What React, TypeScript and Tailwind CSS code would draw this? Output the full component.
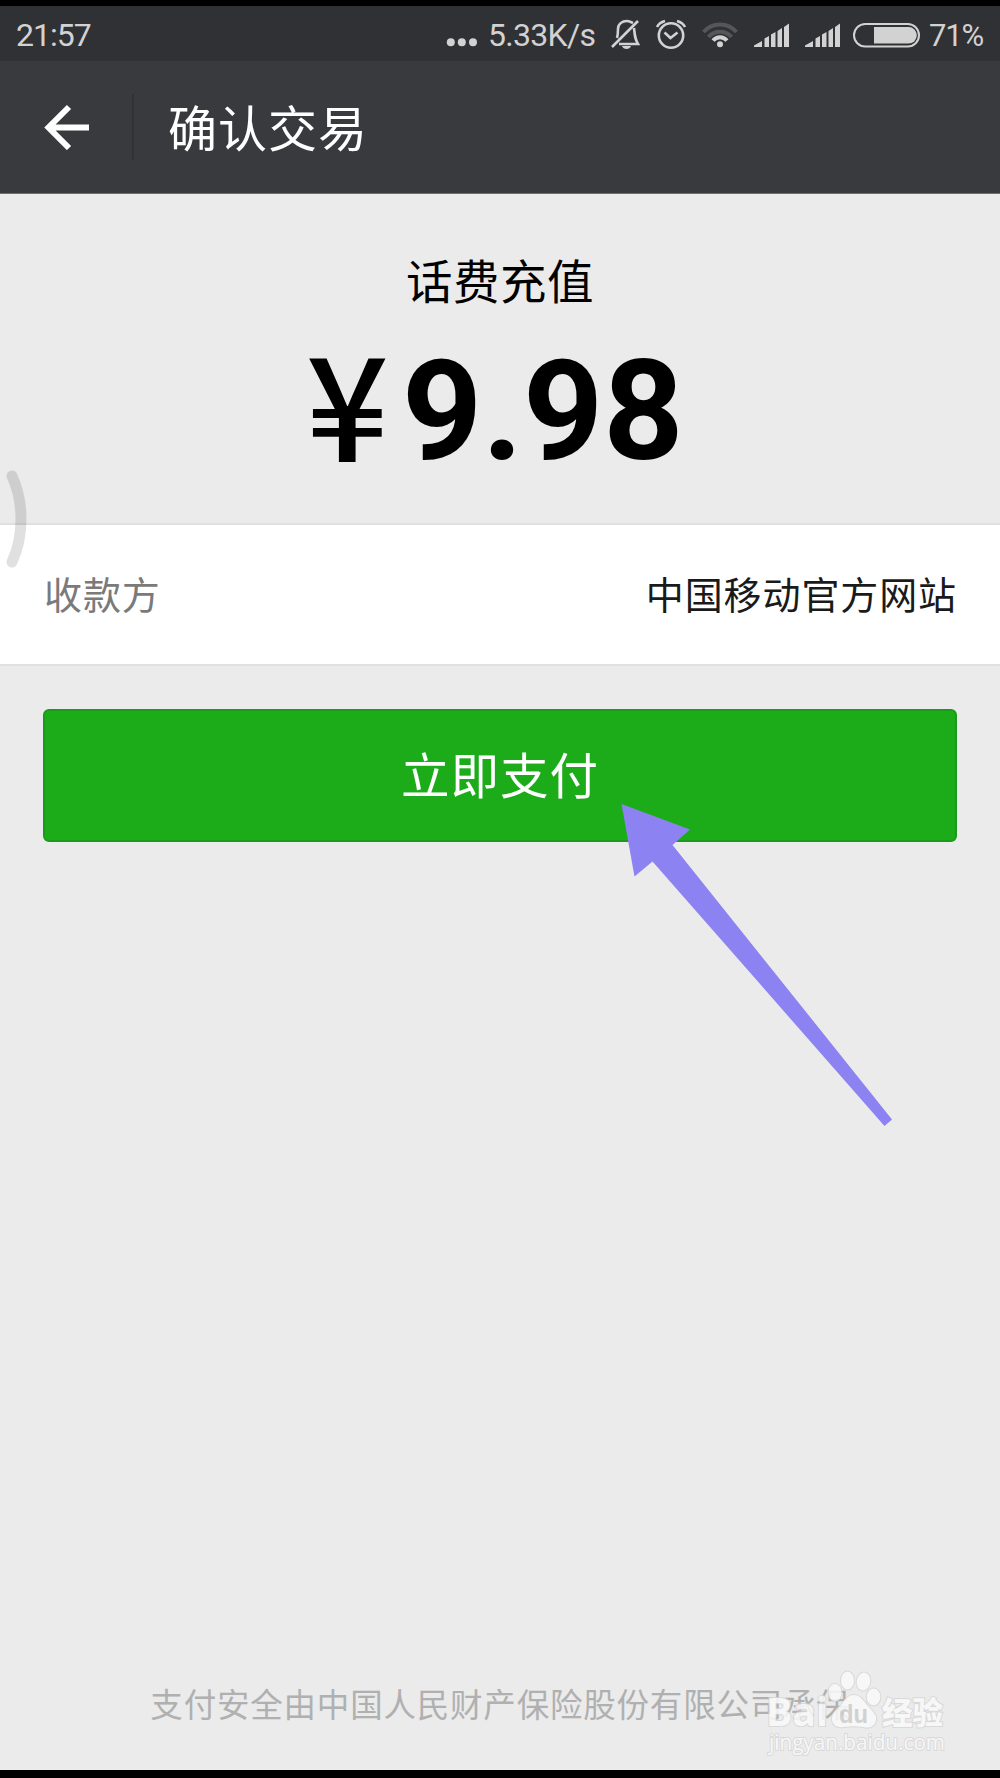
import type { ReactNode } from 'react';

function StatusBar() {
  return (
    <div className="flex h-[55px] items-center bg-[#303135] pl-[16px] text-[#d2d2d3]">
      <span className="w-[430px] pt-[2px] font-['Roboto'] text-[32px] leading-none tracking-[-1px]">21:57</span>
      <svg className="h-[42px] w-[40px] shrink-0" viewBox="446 14 40 42" fill="currentColor">
        <circle cx="450.8" cy="43.3" r="4" />
        <circle cx="461.8" cy="43.3" r="4" />
        <circle cx="473" cy="43.3" r="4" />
      </svg>
      <span className="w-[115px] pt-[2px] pl-[2px] font-['Roboto'] text-[32px] leading-none tracking-[-0.7px]">5.33K/s</span>
      <svg
        className="h-[42px] w-[325px] shrink-0"
        viewBox="601 12 325 42"
        fill="none"
        stroke="currentColor"
        strokeWidth="2.6"
      >
        {/* muted bell */}
        <path d="M612 46L638 20M617 37c1-3 1-6 1-9 0-5 4-8 9-8 2 0 4 1 6 2M634 27c1 9 1 11 4 16H619" />
        <path d="M622 45h9c-1 4-8 4-9 0z" fill="currentColor" stroke="none" />

        {/* alarm clock */}
        <circle cx="671" cy="34.5" r="12.2" />
        <path d="M664.5 31.5l6 5.5 7-5.5M657 26c1.500-3 4.500-5 8-6M677 20c3.500 1 6.500 3 8 6" />

        {/* wifi */}
        <g strokeWidth="4">
          <path d="M703.500 31c9-10 24-10 33 0" stroke="#55565a" />
          <path d="M708.500 36c6-7 17-7 23 0" stroke="#55565a" />
          <path d="M713 39.500c4-4.500 10-4.500 14 0" />
        </g>
        <circle cx="720" cy="43.200" r="3" fill="currentColor" stroke="none" />

        {/* signal strength, both SIM cards */}
        <g fill="currentColor" stroke="none">
          <path d="M754 46v-1.500l8-4.500v6zM764.500 46v-8.500l4.500-2.500v11zM771 46V33.500l4.500-2.500v15zM777.500 46V30l4.500-3v19zM784 46V26l5-3.500V46z" />
          <path d="M805 46v-1.500l8-4.500v6zM815.500 46v-8.500l4.500-2.500v11zM822 46V33.500l4.500-2.500v15zM828.500 46V30l4.500-3v19zM835 46V26l5-3.500V46z" />
        </g>

        {/* battery */}
        <rect x="854" y="23" width="65" height="22.500" rx="11.250" strokeWidth="2" />
        <path d="M874 26h34.500a8.300 8.300 0 010 16.600H874z" fill="currentColor" stroke="none" />
      </svg>
      <span className="pt-[3px] pl-[3px] font-['Roboto'] text-[31px] leading-none tracking-[-1.2px]">71%</span>
    </div>
  );
}

function Header({ title }: { title: string }) {
  return (
    <header className="flex h-[133px] items-center border-b border-[#6f7072] bg-[#393a3e]">
      <button className="flex h-[66px] w-[134px] items-center border-r-2 border-[#303135] pl-[44px]" aria-label="返回">
        <svg className="h-[46px] w-[46px]" viewBox="0 0 46 46" fill="none" stroke="#fff" strokeWidth="6">
          <path d="M25 3L4.500 23.500 25 44M4.500 23.500H45" />
        </svg>
      </button>
      <h1 className="pb-[2px] pl-[34px] text-[49px] leading-[60px] tracking-[1px] text-white">{title}</h1>
    </header>
  );
}

function Row({ label, children }: { label: string; children: ReactNode }) {
  return (
    <div className="flex h-[143px] items-center justify-between border-y-2 border-[#e0e0e0] bg-white pr-[43px] pb-[4px] pl-[44px] text-[38px] tracking-[0.900px]">
      <span className="text-[#7a7a7a]">{label}</span>
      <span className="text-[#1a1a1a]">{children}</span>
    </div>
  );
}

function Watermark() {
  return (
    <svg
      className="absolute top-[1654px] left-[760px] h-[100px] w-[200px]"
      viewBox="760 1660 200 100"
      fill="#fafafa"
      stroke="#d6d6d6"
      strokeWidth="2"
      paintOrder="stroke"
      opacity="0.85"
    >
      <text x="766" y="1726" fontSize="39" fontWeight="700" fontFamily="Open Sans, sans-serif" textLength="62" lengthAdjust="spacingAndGlyphs">Bai</text>
      <ellipse cx="835" cy="1692.500" rx="6.500" ry="8.500" />
      <ellipse cx="847.500" cy="1680.500" rx="6.500" ry="9" />
      <ellipse cx="863.500" cy="1681.500" rx="6.800" ry="9" transform="rotate(10 863.500 1681.500)" />
      <ellipse cx="873.500" cy="1697" rx="6.800" ry="8.500" />
      <path d="M854 1695c-6 0-9 5-13 10s-10 9-9 15 6 8 12 7c7-1 12-1 19 0 7 2 12-1 13-7s-5-10-9-15-7-10-13-10z" />
      <text x="839" y="1722.500" fontSize="26" fontWeight="700" fontFamily="Liberation Sans, sans-serif" fill="#cdcdcd" textLength="29" lengthAdjust="spacingAndGlyphs" stroke="none">du</text>
      <text x="882" y="1724" fontSize="31" fontWeight="900" fontFamily="Noto Sans CJK SC, sans-serif" textLength="61" lengthAdjust="spacingAndGlyphs">经验</text>
      <text x="769" y="1750" fontSize="22" fontFamily="Open Sans, sans-serif" textLength="176" lengthAdjust="spacingAndGlyphs">jingyan.baidu.com</text>
    </svg>
  );
}

function Pointer() {
  return (
    <svg className="absolute top-[794px] left-[618px] h-[330px] w-[280px]" viewBox="618 800 280 330" fill="#8d82f1">
      <path d="M621.500 804L690 829.500 672.500 845 892 1119.500 884.500 1126 652.500 861.500 634.500 876.500z" />
    </svg>
  );
}

function App() {
  return (
    <div className="relative flex h-[1778px] w-[1000px] flex-col overflow-hidden border-t-[6px] border-b-[8px] border-black bg-[#ebebeb] font-['Noto_Sans_CJK_SC',sans-serif]">
      <StatusBar />
      <Header title="确认交易" />

      <section className="flex h-[329px] flex-col items-center text-black">
        <h2 className="mt-[55px] text-[46.500px] leading-[60px] tracking-[0.500px]">话费充值</h2>
        <div className="mt-[32px] flex h-[140px] w-full items-center pl-[306px] text-[140px] leading-[140px]">
          <span className="w-[96px] -translate-y-[12px] text-[145px] font-medium">¥</span>
          <span className="font-['Roboto'] font-bold">9.98</span>
        </div>
      </section>

      <Row label="收款方">中国移动官方网站</Row>

      <button className="mx-[43px] mt-[43px] h-[133px] shrink-0 rounded-[6px] border-2 border-[#1c9a1c] bg-[#1cac1a] pb-[4px] text-[48.500px] tracking-[1px] text-white">
        立即支付
      </button>

      <p className="mt-auto mb-[43px] text-center text-[32.500px] leading-[48px] tracking-[0.800px] text-[#b0b0b0]">
        支付安全由中国人民财产保险股份有限公司承保
      </p>

      {/* edge swipe handle */}
      <svg className="absolute top-[460px] left-0 h-[104px] w-[30px]" viewBox="0 466 30 104" fill="none" strokeLinecap="round">
        <path d="M12 476c12 26 12 60 0 86" stroke="#000" strokeOpacity="0.120" strokeWidth="11" />
      </svg>
      <Pointer />
      <Watermark />
    </div>
  );
}

export default App;
